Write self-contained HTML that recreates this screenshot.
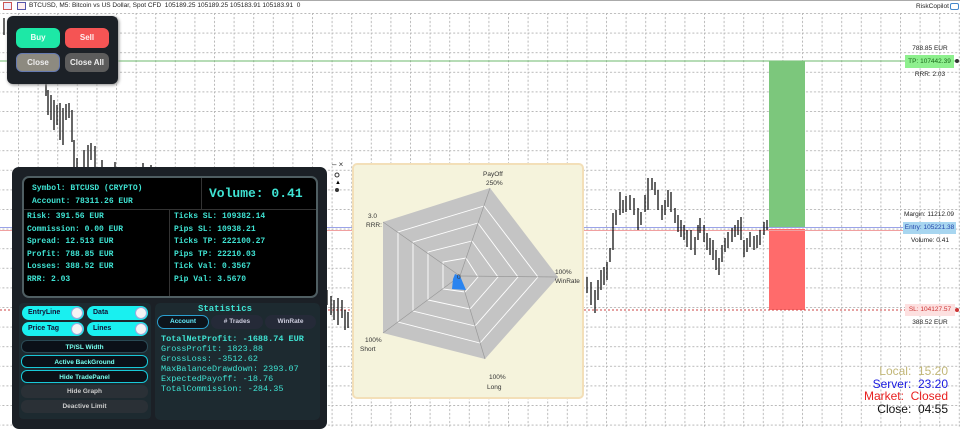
<!DOCTYPE html>
<html><head><meta charset="utf-8"><style>
*{margin:0;padding:0;box-sizing:border-box}
body{width:960px;height:427px;overflow:hidden;background:#fff;position:relative;font-family:"Liberation Sans",sans-serif}
.abs{position:absolute}
.mono{font-family:"Liberation Mono",monospace;font-weight:bold;color:#3fe3d3}
.tgl{position:absolute;height:14px;border-radius:7px;background:#19f0f0;font-size:7px;font-weight:bold;color:#113;padding:3px 0 0 6px}
.tgl i{position:absolute;right:1px;top:1px;width:12px;height:12px;border-radius:6px;background:#f4f4f4;border:1px solid #9ad}
.btn{position:absolute;left:21px;width:127px;height:13px;border-radius:6px;font-size:6.5px;font-weight:bold;text-align:center;padding-top:3px}
.lbl{position:absolute;font-size:6.5px;color:#222;text-align:center;white-space:nowrap}
</style></head><body>
<svg class="abs" style="left:0;top:0" width="960" height="427">
<defs><pattern id="g" x="18" y="13" width="19.6" height="19.6" patternUnits="userSpaceOnUse">
<path d="M0.5 0V19.6M0 0.5H19.6" stroke="#b8b8b8" stroke-width="1" stroke-dasharray="2,2" fill="none"/></pattern></defs>
<rect x="0" y="12" width="960" height="415" fill="url(#g)"/>
<line x1="0" y1="0.5" x2="960" y2="0.5" stroke="#aaa"/>
<line x1="0" y1="61" x2="958" y2="61" stroke="#6cb86c" stroke-width="1"/>
<rect x="769" y="61" width="36" height="167" fill="#7cc77c"/>
<rect x="769" y="229" width="36" height="81" fill="#ff6b6b"/>
<line x1="0" y1="227.5" x2="905" y2="227.5" stroke="#9aa3e8"/>
<line x1="0" y1="230.5" x2="905" y2="230.5" stroke="#f0a0a0"/>
<line x1="0" y1="310" x2="958" y2="310" stroke="#c44" stroke-dasharray="2,2"/>
<circle cx="957" cy="61" r="2" fill="#333"/><circle cx="957" cy="310" r="2" fill="#c33"/>
<g stroke="#000" stroke-width="1.2">
<line x1="4" y1="18" x2="4" y2="35"/><line x1="46" y1="82" x2="46" y2="96"/><line x1="48" y1="90" x2="48" y2="115"/>
<line x1="51" y1="95" x2="51" y2="120"/><line x1="54" y1="100" x2="54" y2="130"/><line x1="57" y1="105" x2="57" y2="125"/>
<line x1="60" y1="103" x2="60" y2="140"/><line x1="63" y1="108" x2="63" y2="145"/><line x1="66" y1="104" x2="66" y2="120"/>
<line x1="69" y1="103" x2="69" y2="118"/><line x1="72" y1="110" x2="72" y2="142"/><line x1="74" y1="140" x2="74" y2="168"/>
<line x1="77" y1="158" x2="77" y2="168"/><line x1="84" y1="150" x2="84" y2="168"/><line x1="88" y1="145" x2="88" y2="168"/>
<line x1="91" y1="143" x2="91" y2="160"/><line x1="95" y1="146" x2="95" y2="168"/><line x1="102" y1="160" x2="102" y2="168"/>
<line x1="115" y1="162" x2="115" y2="168"/><line x1="143" y1="163" x2="143" y2="168"/><line x1="151" y1="165" x2="151" y2="168"/>
<line x1="327" y1="290" x2="327" y2="305"/><line x1="331" y1="296" x2="331" y2="315"/><line x1="334" y1="300" x2="334" y2="320"/>
<line x1="338" y1="298" x2="338" y2="325"/><line x1="342" y1="300" x2="342" y2="318"/><line x1="345" y1="310" x2="345" y2="330"/><line x1="348" y1="312" x2="348" y2="328"/>
<line x1="587" y1="277" x2="587" y2="293"/><line x1="591" y1="282" x2="591" y2="305"/><line x1="595" y1="290" x2="595" y2="313"/>
<line x1="598" y1="280" x2="598" y2="300"/><line x1="601" y1="270" x2="601" y2="290"/><line x1="604" y1="267" x2="604" y2="285"/>
<line x1="607" y1="262" x2="607" y2="280"/><line x1="610" y1="248" x2="610" y2="262"/><line x1="613" y1="213" x2="613" y2="250"/>
<line x1="616" y1="210" x2="616" y2="225"/><line x1="620" y1="192" x2="620" y2="215"/><line x1="623" y1="200" x2="623" y2="213"/>
<line x1="626" y1="196" x2="626" y2="212"/><line x1="630" y1="195" x2="630" y2="210"/><line x1="634" y1="198" x2="634" y2="215"/>
<line x1="638" y1="208" x2="638" y2="230"/><line x1="641" y1="212" x2="641" y2="225"/><line x1="645" y1="195" x2="645" y2="212"/>
<line x1="648" y1="178" x2="648" y2="210"/><line x1="652" y1="178" x2="652" y2="190"/><line x1="655" y1="182" x2="655" y2="195"/>
<line x1="658" y1="190" x2="658" y2="210"/><line x1="662" y1="205" x2="662" y2="220"/><line x1="665" y1="200" x2="665" y2="215"/>
<line x1="668" y1="190" x2="668" y2="207"/><line x1="671" y1="192" x2="671" y2="212"/><line x1="675" y1="208" x2="675" y2="223"/>
<line x1="678" y1="215" x2="678" y2="232"/><line x1="681" y1="220" x2="681" y2="237"/><line x1="684" y1="225" x2="684" y2="240"/>
<line x1="687" y1="230" x2="687" y2="247"/><line x1="691" y1="230" x2="691" y2="250"/><line x1="695" y1="237" x2="695" y2="255"/>
<line x1="698" y1="225" x2="698" y2="240"/><line x1="700" y1="218" x2="700" y2="233"/><line x1="704" y1="225" x2="704" y2="242"/>
<line x1="707" y1="233" x2="707" y2="250"/><line x1="710" y1="238" x2="710" y2="255"/><line x1="713" y1="240" x2="713" y2="260"/>
<line x1="716" y1="250" x2="716" y2="270"/><line x1="719" y1="258" x2="719" y2="275"/><line x1="722" y1="245" x2="722" y2="262"/>
<line x1="725" y1="238" x2="725" y2="252"/><line x1="728" y1="232" x2="728" y2="248"/><line x1="732" y1="228" x2="732" y2="242"/>
<line x1="735" y1="225" x2="735" y2="237"/><line x1="738" y1="220" x2="738" y2="235"/><line x1="741" y1="217" x2="741" y2="240"/>
<line x1="744" y1="240" x2="744" y2="257"/><line x1="747" y1="238" x2="747" y2="252"/><line x1="750" y1="232" x2="750" y2="247"/>
<line x1="754" y1="236" x2="754" y2="250"/><line x1="757" y1="235" x2="757" y2="248"/><line x1="760" y1="230" x2="760" y2="245"/>
<line x1="764" y1="222" x2="764" y2="235"/><line x1="767" y1="220" x2="767" y2="230"/>
</g>
<text x="332" y="167" font-size="8" fill="#333">– ×</text>
<circle cx="337" cy="175" r="2" fill="none" stroke="#333"/><text x="335" y="184" font-size="6">▲</text><circle cx="337" cy="190" r="2" fill="#333"/>
</svg>

<div class="abs" style="left:3px;top:2px;width:9px;height:8px;border:1px solid #c55;background:#eef"></div>
<div class="abs" style="left:17px;top:2px;width:9px;height:8px;border:1px solid #55a;background:#fee"></div>
<div class="abs" style="left:29px;top:2px;font-size:6.5px;color:#222;white-space:nowrap">BTCUSD, M5: Bitcoin vs US Dollar, Spot CFD &nbsp;105189.25 105189.25 105183.91 105183.91 &nbsp;0</div>
<div class="abs" style="left:916px;top:3px;font-size:6.5px;color:#222">RiskCopilot</div>
<div class="abs" style="left:950px;top:3px;width:9px;height:7px;border:1px solid #48c;border-radius:2px"></div>

<div class="abs" style="left:7px;top:16px;width:111px;height:68px;background:#1c2127;border-radius:6px;box-shadow:1px 1px 3px #888"></div>
<div class="abs" style="left:16px;top:28px;width:44px;height:20px;background:#1de8a6;border-radius:6px;color:#eafff6;font-size:8px;font-weight:bold;text-align:center;line-height:20px">Buy</div>
<div class="abs" style="left:65px;top:28px;width:44px;height:20px;background:#f55454;border-radius:6px;color:#fff0f0;font-size:8px;font-weight:bold;text-align:center;line-height:20px">Sell</div>
<div class="abs" style="left:16px;top:53px;width:44px;height:19px;background:#8d8a80;border:1px solid #667ab0;border-radius:6px;color:#eee;font-size:8px;font-weight:bold;text-align:center;line-height:17px">Close</div>
<div class="abs" style="left:65px;top:53px;width:44px;height:19px;background:#5c5c5c;border-radius:6px;color:#eee;font-size:8px;font-weight:bold;text-align:center;line-height:19px">Close All</div>

<div class="lbl" style="left:905px;top:45px;width:50px">788.85 EUR</div>
<div class="lbl" style="left:905px;top:55px;width:49px;height:13px;background:#8ef08e;color:#1a6a1a;line-height:13px">TP: 107442.39</div>
<div class="lbl" style="left:905px;top:71px;width:50px">RRR: 2.03</div>
<div class="lbl" style="left:900px;top:211px;width:58px">Margin: 11212.09</div>
<div class="lbl" style="left:903px;top:222px;width:53px;height:12px;background:#a8d6f0;color:#2244aa;line-height:12px">Entry: 105221.38</div>
<div class="lbl" style="left:905px;top:237px;width:50px">Volume: 0.41</div>
<div class="lbl" style="left:905px;top:304px;width:50px;height:12px;background:#fde0e0;color:#c33;line-height:12px">SL: 104127.57</div>
<div class="lbl" style="left:905px;top:319px;width:50px">388.52 EUR</div>

<div class="abs" style="right:12px;top:365px;text-align:right;font-size:12px;line-height:12.5px">
<div style="color:#c2b778">Local:&nbsp; 15:20</div><div style="color:#1a1ae0">Server:&nbsp; 23:20</div>
<div style="color:#e82020">Market:&nbsp; Closed</div><div style="color:#111">Close:&nbsp; 04:55</div></div>

<div class="abs" style="left:352px;top:163px;width:232px;height:236px;background:#f5f3dc;border:2px solid #f3dfb8;border-radius:5px"></div>
<svg class="abs" style="left:0;top:0" width="960" height="427">
<polygon points="490,188 558,277 485,359 383,333 383,222" fill="#c4c4c4"/>
<g fill="none" stroke="#fff" stroke-width="0.9">
<polygon points="484,206 538,277 480,343 398,322 398,232"/>
<polygon points="478,223 518,277 475,326 413,311 413,242"/>
<polygon points="472,241 498,277 470,309 428,300 428,252"/>
<polygon points="466,258 478,277 465,292 443,289 443,262"/>
</g>
<g stroke="#999" stroke-width="0.7"><line x1="460" y1="276" x2="490" y2="188"/><line x1="460" y1="276" x2="558" y2="277"/><line x1="460" y1="276" x2="485" y2="359"/><line x1="460" y1="276" x2="383" y2="333"/><line x1="460" y1="276" x2="383" y2="222"/></g>
<polygon points="455,274 460,276 466,290 452,289 453,279" fill="#2a84f0"/>
<g font-size="6.5" fill="#333" font-family="Liberation Sans">
<text x="483" y="176">PayOff</text><text x="486" y="185">250%</text>
<text x="368" y="218">3.0</text><text x="366" y="227">RRR:</text>
<text x="555" y="274">100%</text><text x="555" y="283">WinRate</text>
<text x="365" y="342">100%</text><text x="360" y="351">Short</text>
<text x="489" y="379">100%</text><text x="487" y="389">Long</text>
<text x="457" y="279">0</text></g>
</svg>

<div class="abs" style="left:12px;top:167px;width:315px;height:262px;background:#1b2026;border-radius:7px"></div>
<div class="abs" style="left:22px;top:176px;width:296px;height:122px;background:#000;border:2px solid #4f5e62;border-radius:7px"></div>
<div class="abs" style="left:24px;top:209px;width:292px;height:1px;background:#333"></div>
<div class="abs" style="left:201px;top:178px;width:1px;height:31px;background:#333"></div>
<div class="abs" style="left:169px;top:210px;width:1px;height:86px;background:#333"></div>
<div class="abs mono" style="left:32px;top:182px;font-size:8px;line-height:13px">Symbol: BTCUSD (CRYPTO)<br>Account: 78311.26 EUR</div>
<div class="abs mono" style="left:209px;top:186px;font-size:13px">Volume: 0.41</div>
<div class="abs mono" style="left:27px;top:211px;font-size:8px;line-height:12.5px">Risk: 391.56 EUR<br>Commission: 0.00 EUR<br>Spread: 12.513 EUR<br>Profit: 788.85 EUR<br>Losses: 388.52 EUR<br>RRR: 2.03</div>
<div class="abs mono" style="left:174px;top:211px;font-size:8px;line-height:12.5px">Ticks SL: 109382.14<br>Pips SL: 10938.21<br>Ticks TP: 222100.27<br>Pips TP: 22210.03<br>Tick Val: 0.3567<br>Pip Val: 3.5670</div>

<div class="abs" style="left:19px;top:303px;width:132px;height:116px;background:#1d2a30;border-radius:4px"></div>
<div class="tgl" style="left:22px;top:306px;width:62px">EntryLine<i></i></div>
<div class="tgl" style="left:87px;top:306px;width:61px">Data<i></i></div>
<div class="tgl" style="left:22px;top:322px;width:62px">Price Tag<i></i></div>
<div class="tgl" style="left:87px;top:322px;width:61px">Lines<i></i></div>
<div class="btn" style="top:340px;background:#0b1018;border:1px solid #2a4a55;color:#7fe;">TP/SL Width</div>
<div class="btn" style="top:355px;background:#0b1018;border:1px solid #18c8d8;color:#7fe">Active BackGround</div>
<div class="btn" style="top:370px;background:#0b1018;border:1px solid #18c8d8;color:#7fe">Hide TradePanel</div>
<div class="btn" style="top:385px;background:#2a3036;color:#ccc">Hide Graph</div>
<div class="btn" style="top:400px;background:#2a3036;color:#ccc">Deactive Limit</div>

<div class="abs" style="left:155px;top:303px;width:165px;height:117px;background:#1d2a30;border-radius:5px"></div>
<div class="abs mono" style="left:155px;top:304px;width:140px;text-align:center;font-size:9px">Statistics</div>
<div class="abs" style="left:157px;top:315px;width:52px;height:14px;border-radius:7px;background:#0d141c;border:1px solid #2a9fcf;color:#6ef;font-size:6.5px;font-weight:bold;text-align:center;line-height:12px">Account</div>
<div class="abs" style="left:211px;top:315px;width:52px;height:14px;border-radius:7px;background:#252a38;color:#ccd;font-size:6.5px;font-weight:bold;text-align:center;line-height:14px"># Trades</div>
<div class="abs" style="left:265px;top:315px;width:51px;height:14px;border-radius:7px;background:#252a38;color:#ccd;font-size:6.5px;font-weight:bold;text-align:center;line-height:14px">WinRate</div>
<div class="abs mono" style="left:161px;top:334px;font-size:8.5px;line-height:10px">TotalNetProfit: -1688.74 EUR</div>
<div class="abs mono" style="left:161px;top:344px;font-size:8.5px;line-height:10px;font-weight:normal">GrossProfit: 1823.88<br>GrossLoss: -3512.62<br>MaxBalanceDrawdown: 2393.07<br>ExpectedPayoff: -18.76<br>TotalCommission: -284.35</div>
</body></html>
